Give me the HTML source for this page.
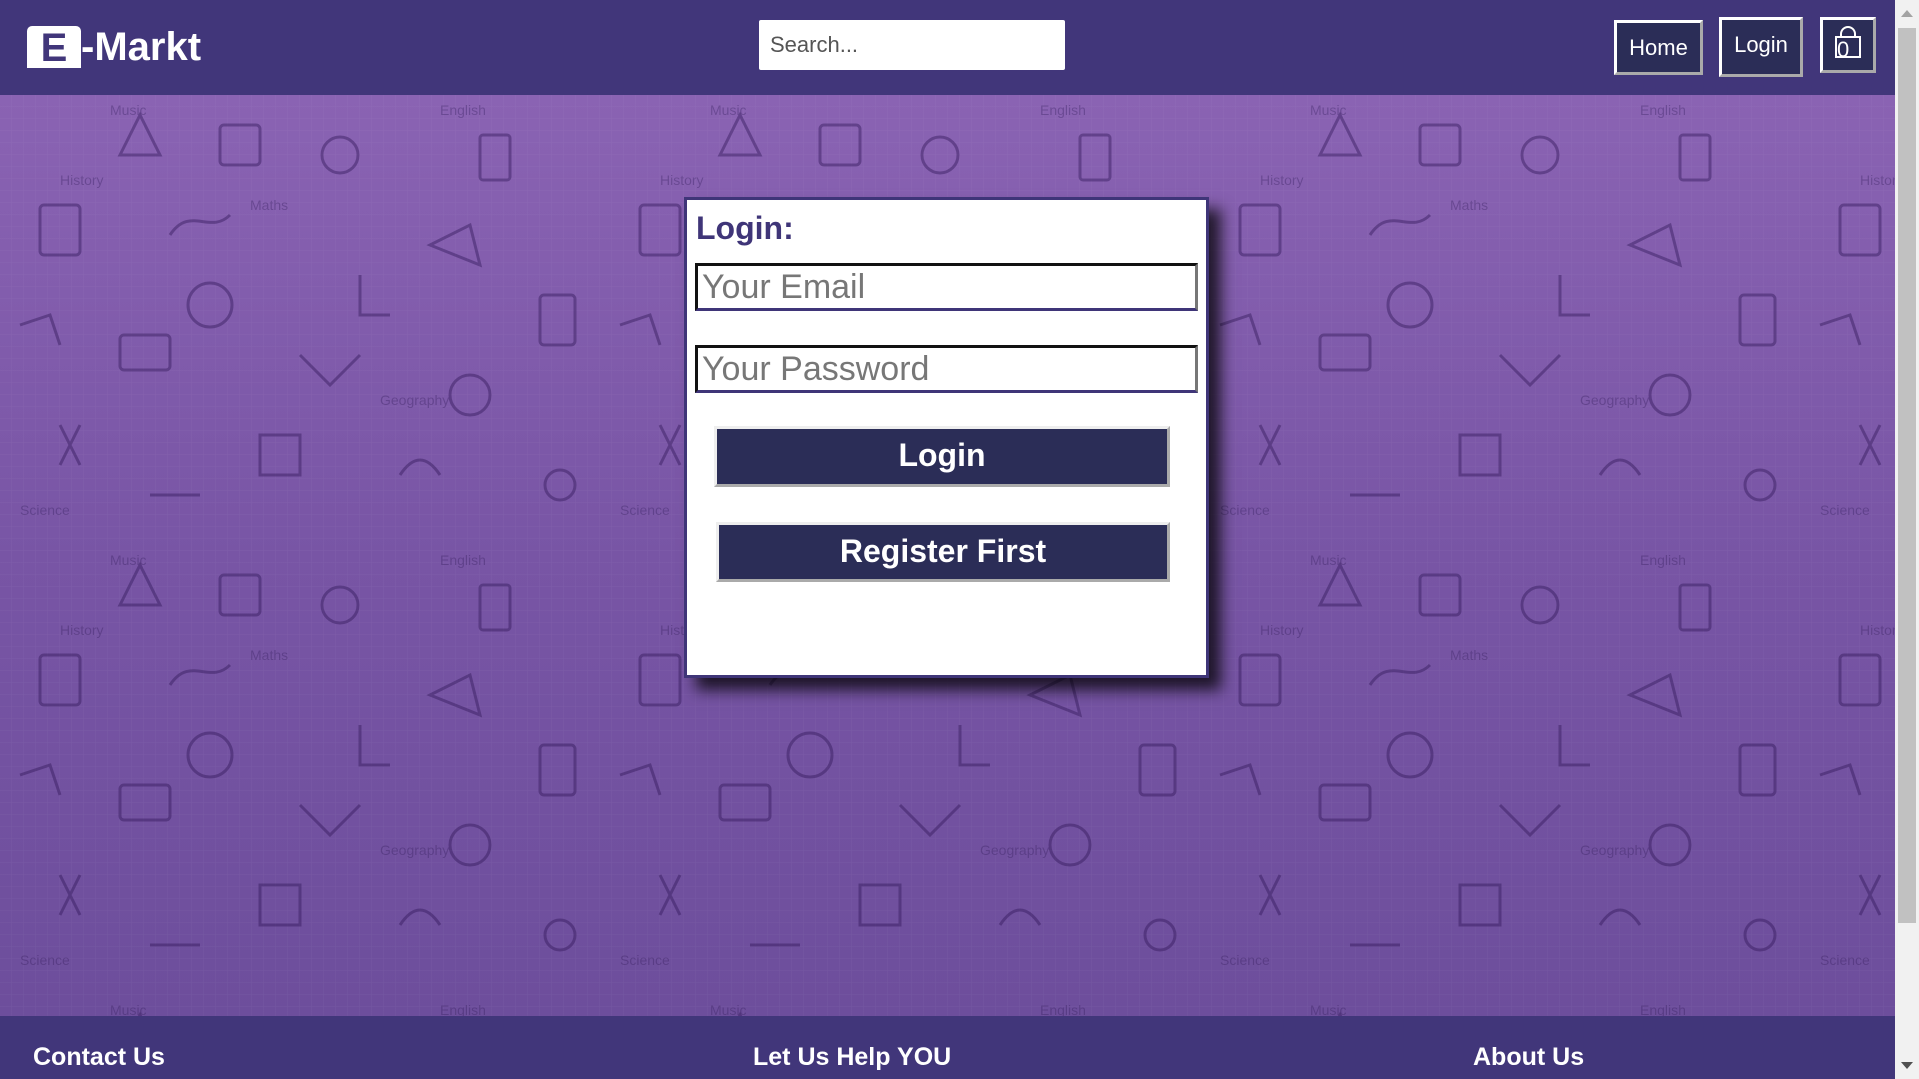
<!DOCTYPE html>
<html><head><meta charset="utf-8"><style>
*{margin:0;padding:0;box-sizing:border-box}
body{width:1919px;height:1079px;overflow:hidden;font-family:"Liberation Sans",sans-serif;position:relative;background:#fff}
.hdr{position:absolute;left:0;top:0;width:1895px;height:95px;background:#41367a}
.main{position:absolute;left:0;top:95px;width:1895px;height:921px;background:linear-gradient(#8a63b3,#7855a5 50%,#6d4e9c)}
.main svg{position:absolute;left:0;top:0}
.ftr{position:absolute;left:0;top:1016px;width:1895px;height:63px;background:#41367a;color:#fff;font-weight:bold;font-size:25px}
.ftr span{position:absolute;top:27px}
.sb{position:absolute;right:0;top:0;width:24px;height:1079px;background:#f1f1f1}
.sb .th{position:absolute;left:3px;top:28px;width:18px;height:895px;background:#c1c1c1}
.logo{position:absolute;left:27px;top:24px;color:#fff;font-weight:bold;font-size:40px;line-height:46px}
.search{position:absolute;left:759px;top:20px;width:306px;height:50px;background:#fff;border-radius:2px;font-size:22px;color:#555;padding:12px 11px}
.nb{position:absolute;background:#2b2d57;color:#fff;border:3px solid;border-color:#fff #aaa #aaa #fff;font-size:22px;text-align:center}
.card{position:absolute;left:684px;top:197px;width:525px;height:481px;background:#fff;border:3px solid #3f3578;box-shadow:12px 12px 14px rgba(0,0,0,.75)}
.card h2{position:absolute;left:9px;top:10px;color:#3f3578;font-size:32px}
.inp{position:absolute;left:8px;width:503px;height:48px;border:3px solid;border-color:#111 #777 #3f3578 #111;font-size:34px;color:#777;padding:2px 4px;line-height:38px}
.btn{position:absolute;background:#2b2d57;color:#fff;font-weight:bold;font-size:32px;text-align:center;border:3px solid;border-color:#eee #aaa #aaa #eee}
</style></head><body>
<div class="hdr">
 <div class="logo"><span style="display:inline-block;background:#fff;color:#41367a;border-radius:5px 5px 0 0;width:54px;text-align:center;height:42px;line-height:44px;vertical-align:top;margin-top:2px;border-bottom:4px solid #fff">E</span>-Markt</div>
 <div class="search">Search...</div>
 <div class="nb" style="left:1614px;top:20px;width:89px;height:55px;line-height:49px">Home</div>
 <div class="nb" style="left:1719px;top:17px;width:84px;height:60px;line-height:50px">Login</div>
 <div class="nb" style="left:1820px;top:17px;width:56px;height:56px">
  <svg width="50" height="50" viewBox="0 0 50 50" style="display:block"><path d="M13 17h24v20H13z" fill="none" stroke="#fff" stroke-width="2"/><path d="M18 17v-3a7 7 0 0 1 14 0v3" fill="none" stroke="#fff" stroke-width="2"/><text x="14" y="37" fill="#fff" font-size="22" font-family="Liberation Sans">0</text></svg>
 </div>
</div>
<div class="main">
<svg width="1895" height="921">
<defs>
<pattern id="g" width="12" height="12" patternUnits="userSpaceOnUse"><path d="M12 0V12M0 12H12" stroke="rgba(255,255,255,.05)" stroke-width="1"/></pattern>
<pattern id="d" width="600" height="450" patternUnits="userSpaceOnUse">
<g fill="none" stroke="rgba(50,25,90,.45)" stroke-width="3">
<rect x="220" y="30" width="40" height="40" rx="4"/><circle cx="340" cy="60" r="18"/><path d="M120 60l20-40 20 40z"/>
<rect x="40" y="110" width="40" height="50" rx="4"/><path d="M170 140c20-30 40 0 60-20"/><circle cx="210" cy="210" r="22"/>
<path d="M430 150l40-20 10 40z"/><rect x="120" y="240" width="50" height="35" rx="4"/><path d="M300 260l30 30 30-30"/>
<rect x="480" y="40" width="30" height="45" rx="3"/><path d="M60 330l20 40M80 330l-20 40"/><circle cx="470" cy="300" r="20"/>
<path d="M260 340h40v40h-40z"/><path d="M400 380q20-30 40 0"/><rect x="540" y="200" width="35" height="50" rx="4"/>
<path d="M20 230l30-10 10 30"/><circle cx="560" cy="390" r="15"/><path d="M150 400h50"/><path d="M360 180v40h30"/>
</g>
<g fill="rgba(50,25,90,.35)" font-family="Liberation Sans" font-size="14"><text x="110" y="20">Music</text><text x="440" y="20">English</text><text x="60" y="90">History</text><text x="250" y="115">Maths</text><text x="380" y="310">Geography</text><text x="20" y="420">Science</text></g>
</pattern>
</defs>
<rect width="1895" height="921" fill="url(#g)"/>
<rect width="1895" height="921" fill="url(#d)"/>
</svg>
</div>
<div class="card">
 <h2>Login:</h2>
 <div class="inp" style="top:63px">Your Email</div>
 <div class="inp" style="top:145px">Your Password</div>
 <div class="btn" style="left:27px;top:226px;width:456px;height:61px;line-height:53px">Login</div>
 <div class="btn" style="left:29px;top:322px;width:454px;height:60px;line-height:52px">Register First</div>
</div>
<div class="ftr"><span style="left:33px">Contact Us</span><span style="left:753px">Let Us Help YOU</span><span style="left:1473px">About Us</span></div>
<div class="sb"><div class="th"></div><div style="position:absolute;left:6px;top:10px;border:6px solid transparent;border-bottom:7px solid #a3a3a3;border-top:0"></div><div style="position:absolute;left:6px;top:1062px;border:6px solid transparent;border-top:7px solid #505050;border-bottom:0"></div></div>
</body></html>
